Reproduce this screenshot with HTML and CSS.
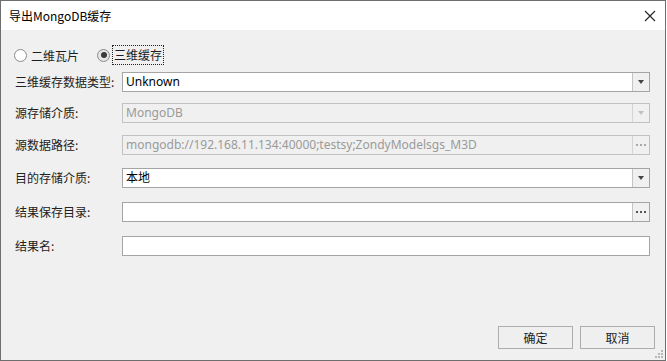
FILE: index.html
```html
<!DOCTYPE html>
<html lang="zh-CN">
<head>
  <meta charset="UTF-8">
  <title>导出MongoDB缓存</title>
  <link rel="stylesheet" href="styles.css">
</head>
<body>
  <div class="window">
    <!-- 标题栏 -->
    <div class="titlebar">
      <span class="title">导出MongoDB缓存</span>
      <svg class="close" width="12" height="12" viewBox="0 0 12 12">
        <path d="M1 1 L11 11 M11 1 L1 11" stroke="#222" stroke-width="1.1" fill="none"/>
      </svg>
    </div>

    <div class="content">
      <!-- 类型选择 -->
      <div class="radios">
        <label class="radio"><span class="dot"></span><span>二维瓦片</span></label>
        <label class="radio checked"><span class="dot"></span><span class="focus">三维缓存</span></label>
      </div>

      <div class="form">
        <div class="row">
          <span class="label">三维缓存数据类型:</span>
          <div class="box">
            <span class="val">Unknown</span>
            <span class="btn"><i class="arrow"></i></span>
          </div>
        </div>
        <div class="row">
          <span class="label">源存储介质:</span>
          <div class="box disabled">
            <span class="val">MongoDB</span>
            <span class="btn"><i class="arrow"></i></span>
          </div>
        </div>
        <div class="row">
          <span class="label">源数据路径:</span>
          <div class="box disabled">
            <span class="val">mongodb://192.168.11.134:40000;testsy;ZondyModelsgs_M3D</span>
            <span class="btn"><i class="dots"></i></span>
          </div>
        </div>
        <div class="row">
          <span class="label">目的存储介质:</span>
          <div class="box">
            <span class="val">本地</span>
            <span class="btn"><i class="arrow"></i></span>
          </div>
        </div>
        <div class="row">
          <span class="label">结果保存目录:</span>
          <div class="box">
            <span class="val"></span>
            <span class="btn"><i class="dots"></i></span>
          </div>
        </div>
        <div class="row">
          <span class="label">结果名:</span>
          <div class="box">
            <span class="val"></span>
          </div>
        </div>
      </div>

      <div class="footer">
        <button class="button">确定</button>
        <button class="button">取消</button>
      </div>

      <svg class="grip" width="9" height="9" viewBox="0 0 9 9">
        <rect x="6" y="0" width="2" height="2" fill="#b8b8b8"/>
        <rect x="3" y="3" width="2" height="2" fill="#b8b8b8"/>
        <rect x="6" y="3" width="2" height="2" fill="#b8b8b8"/>
        <rect x="0" y="6" width="2" height="2" fill="#b8b8b8"/>
        <rect x="3" y="6" width="2" height="2" fill="#b8b8b8"/>
        <rect x="6" y="6" width="2" height="2" fill="#b8b8b8"/>
      </svg>
    </div>
  </div>
</body>
</html>
```

FILE: styles.css
```css
body {
  margin: 0;
  font-family: "Noto Sans", "Noto Sans CJK SC", sans-serif;
  font-size: 12px;
  color: #1e1e1e;
  background: #ffffff;
}
.window {
  width: 666px;
  height: 361px;
  box-sizing: border-box;
  border: 1px solid #6e6e6e;
  display: flex;
  flex-direction: column;
}
.titlebar {
  height: 29px;
  background: #ffffff;
  display: flex;
  align-items: center;
  justify-content: space-between;
  padding: 0 9px 0 8px;
}
.title {
  font-family: "Noto Sans CJK SC", sans-serif;
  font-size: 12px;
  color: #000;
}
.close {
  display: block;
}
.content {
  flex: 1;
  position: relative;
  background: #f0f0f0;
  display: flex;
  flex-direction: column;
  padding-top: 16px;
}
.radios {
  display: flex;
  height: 18px;
  align-items: center;
  padding-left: 13px;
  gap: 18px;
}
.radio {
  display: flex;
  align-items: center;
  gap: 4px;
  font-family: "Noto Sans CJK SC", sans-serif;
}
.dot {
  width: 11px;
  height: 11px;
  border: 1px solid #8a8a8a;
  border-radius: 50%;
  background: #ffffff;
  position: relative;
}
.checked .dot {
  background: #e6e6e6;
}
.checked .dot::after {
  content: "";
  position: absolute;
  left: 2.5px;
  top: 2.5px;
  width: 6px;
  height: 6px;
  border-radius: 50%;
  background: #3a3a3a;
}
.focus {
  outline: 1px dotted #222;
  outline-offset: 1px;
  line-height: 16px;
}
.form {
  margin-top: 8px;
  padding-left: 14px;
  padding-right: 15px;
  display: grid;
  grid-template-columns: 107px 1fr;
  grid-template-rows: 31px 32px 33px 34px 34px 20px;
}
.row {
  display: contents;
}
.label {
  font-family: "Noto Sans CJK SC", sans-serif;
  height: 20px;
  line-height: 20px;
  color: #222;
}
.box {
  height: 20px;
  box-sizing: border-box;
  border: 1px solid #a5a5a5;
  background: #ffffff;
  display: flex;
}
.val {
  flex: 1;
  padding-left: 3px;
  line-height: 18px;
  white-space: nowrap;
  overflow: hidden;
  color: #000;
}
.btn {
  width: 16px;
  border-left: 1px solid #c4c4c4;
  background: #f0f0f0;
  display: flex;
  align-items: center;
  justify-content: center;
}
.arrow {
  width: 0;
  height: 0;
  border-left: 3.5px solid transparent;
  border-right: 3.5px solid transparent;
  border-top: 4px solid #444;
}
.dots {
  width: 2px;
  height: 2px;
  background: #555;
  box-shadow: -4px 0 0 #555, 4px 0 0 #555;
}
.disabled {
  border-color: #c2c2c2;
  background: #f0f0f0;
}
.disabled .val {
  color: #9a9a9a;
}
.disabled .btn {
  border-left-color: #d4d4d4;
}
.disabled .arrow {
  border-top-color: #c0c0c0;
}
.disabled .dots {
  background: #a8a8a8;
  box-shadow: -4px 0 0 #a8a8a8, 4px 0 0 #a8a8a8;
}
.footer {
  margin-top: auto;
  display: flex;
  justify-content: flex-end;
  gap: 7px;
  padding: 0 10px 11px 0;
}
.button {
  width: 75px;
  height: 23px;
  border: 1px solid #adadad;
  background: #efefef;
  font-family: "Noto Sans CJK SC", sans-serif;
  font-size: 12px;
  color: #222;
  padding: 0;
}
.grip {
  position: absolute;
  right: 1px;
  bottom: 1px;
}
```
